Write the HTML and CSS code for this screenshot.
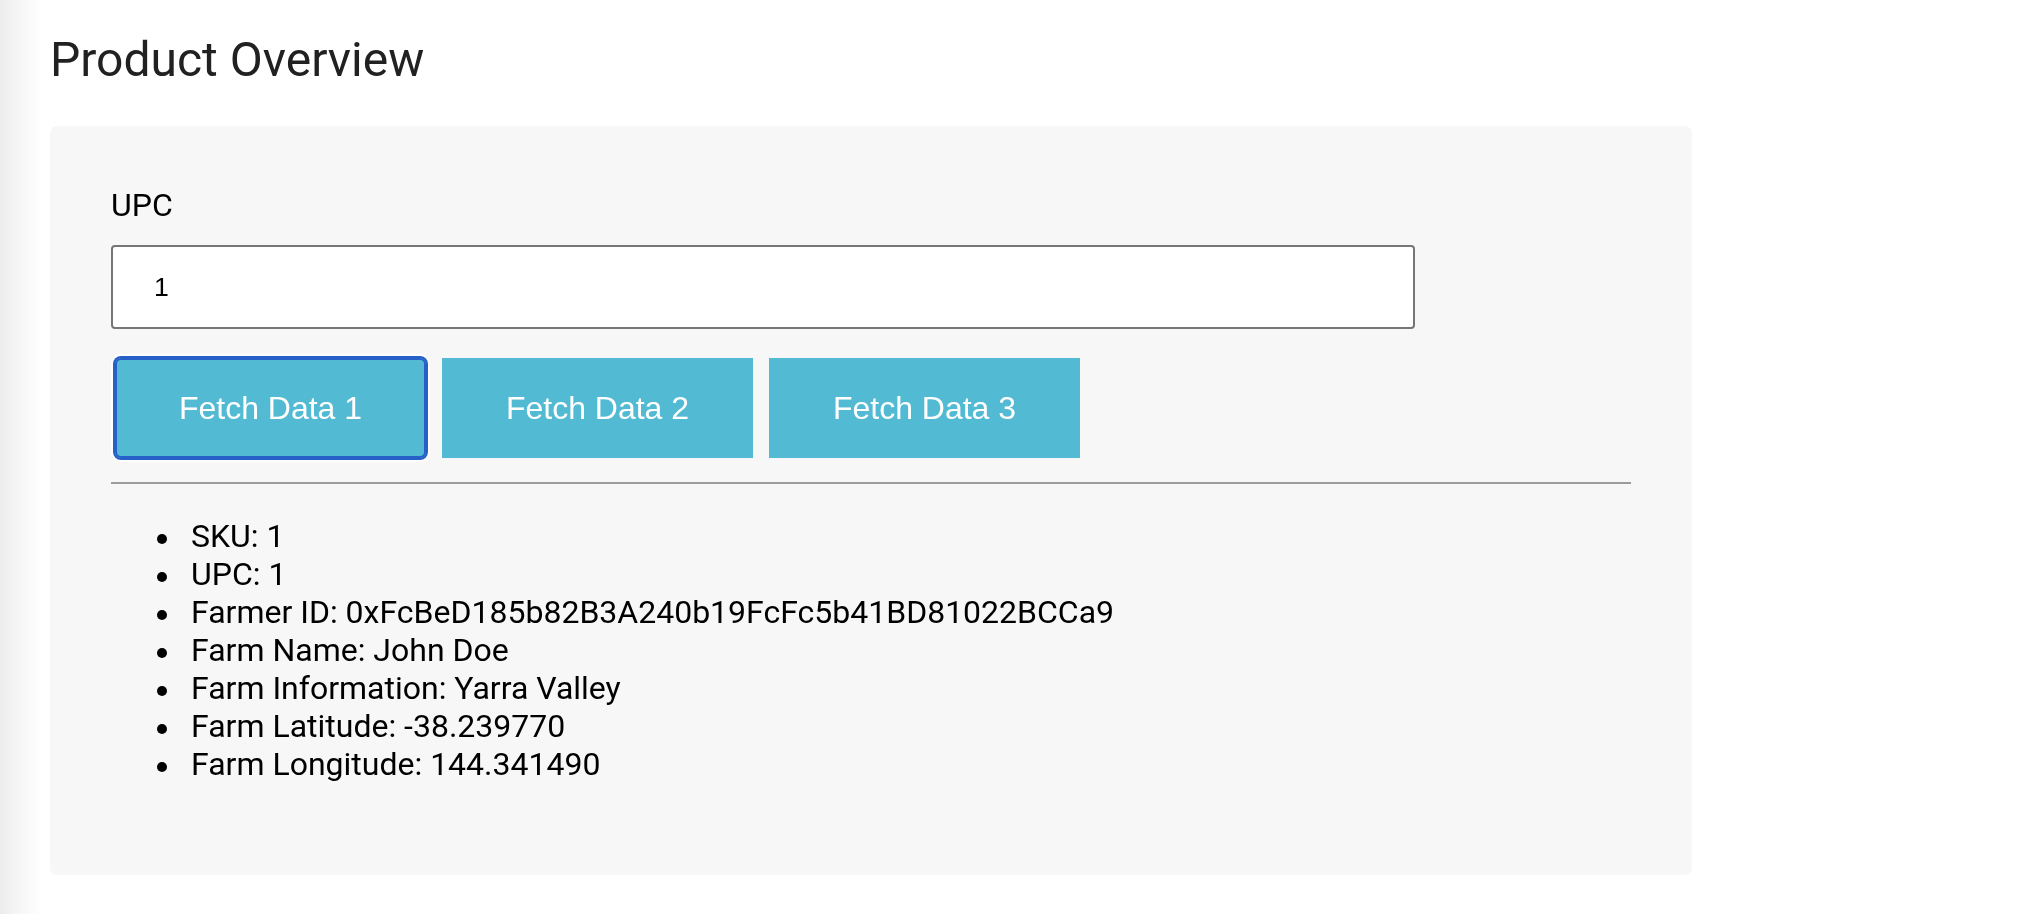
FILE: index.html
```html
<!DOCTYPE html>
<html>
<head>
<meta charset="utf-8">
<link rel="stylesheet" href="styles.css">
</head>
<body>
<div class="edge"></div>
<main class="page">
  <h1 class="title">Product Overview</h1>
  <section class="card">
    <label class="label" for="upc">UPC</label>
    <input class="field" id="upc" type="text" value="1">
    <div class="actions">
      <button class="btn btn-focus">Fetch Data 1</button>
      <button class="btn">Fetch Data 2</button>
      <button class="btn">Fetch Data 3</button>
    </div>
    <hr class="rule">
    <ul class="list">
      <li>SKU: 1</li>
      <li>UPC: 1</li>
      <li>Farmer ID: 0xFcBeD185b82B3A240b19FcFc5b41BD81022BCCa9</li>
      <li>Farm Name: John Doe</li>
      <li>Farm Information: Yarra Valley</li>
      <li>Farm Latitude: -38.239770</li>
      <li>Farm Longitude: 144.341490</li>
    </ul>
  </section>
</main>
</body>
</html>
```

FILE: styles.css
```css
html, body {
  margin: 0;
  padding: 0;
  background: #ffffff;
}
body {
  font-family: Roboto, "Liberation Sans", Arial, sans-serif;
  color: #000;
  height: 914px;
  overflow: hidden;
}
.edge {
  position: fixed;
  left: 0;
  top: 0;
  bottom: 0;
  width: 42px;
  background: linear-gradient(to right, #ececec 0%, #f6f6f6 45%, #ffffff 100%);
}
.page {
  position: relative;
  padding: 32px 0 0 50px;
}
.title {
  margin: 0;
  font-size: 48px;
  font-weight: 400;
  line-height: 56px;
  color: #212121;
}
.card {
  margin-top: 38px;
  width: 1642px;
  height: 749px;
  box-sizing: border-box;
  background: #f7f7f7;
  border-radius: 7px;
  padding: 60px 61px 0 61px;
}
.label {
  display: block;
  font-size: 32px;
  line-height: 38px;
}
.field {
  display: block;
  margin-top: 21px;
  width: 1304px;
  height: 84px;
  box-sizing: border-box;
  border: 2px solid #767676;
  border-radius: 4px;
  background: #fff;
  padding: 0 41px;
  font-family: "Liberation Sans", Arial, sans-serif;
  font-size: 26.67px;
  color: #000;
  outline: none;
}
.actions {
  display: flex;
  gap: 16px;
  margin-top: 29px;
  padding-left: 4px;
}
.btn {
  width: 311px;
  height: 100px;
  border: none;
  border-radius: 0;
  background: #53bad3;
  color: #fff;
  font-family: "Liberation Sans", Arial, sans-serif;
  font-size: 32px;
  padding: 0;
}
.btn-focus {
  border-radius: 6px;
  box-shadow: inset 0 0 0 2px #2760c8, 0 0 0 2px #2760c8, 0 0 0 4px #ffffff;
}
.rule {
  margin: 24px 0 0 0;
  border: none;
  height: 2px;
  background: #9c9c9c;
}
.list {
  margin: 33px 0 0 0;
  padding-left: 80px;
  font-size: 32px;
  line-height: 38px;
  list-style: none;
}
.list li::before {
  content: "";
  display: inline-block;
  width: 10px;
  height: 10px;
  border-radius: 50%;
  background: #000;
  margin-left: -34px;
  margin-right: 24px;
  vertical-align: middle;
}
```
